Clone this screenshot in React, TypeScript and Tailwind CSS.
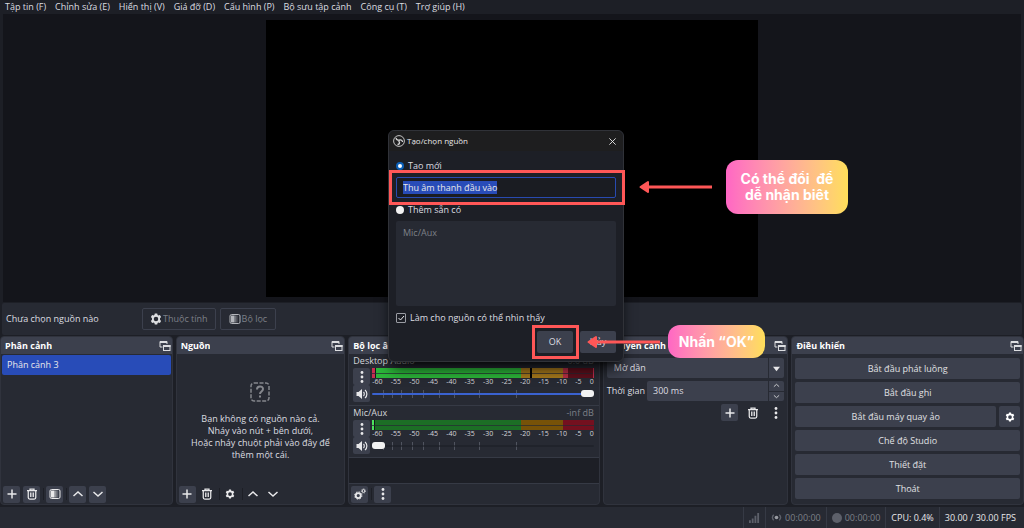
import { useEffect, useRef } from "react";
import type { ReactNode } from "react";

const MENU = [
  "Tập tin (F)",
  "Chỉnh sửa (E)",
  "Hiển thị (V)",
  "Giá đỡ (D)",
  "Cấu hình (P)",
  "Bộ sưu tập cảnh",
  "Công cụ (T)",
  "Trợ giúp (H)",
];

const DB_LABELS = ["-60", "-55", "-50", "-45", "-40", "-35", "-30", "-25", "-20", "-15", "-10", "-5", "0"];
const FADER_TICKS = [5, 9, 13, 18, 23, 30, 37, 48, 65];

function GearIcon({ className = "size-3" }: { className?: string }) {
  return (
    <svg viewBox="0 0 24 24" className={className} fill="currentColor" aria-hidden="true">
      <path
        fillRule="evenodd"
        d="M9.6 1h4.8l.8 3 1.600.9 3-.9 2.400 4.100-2.200 2.200v3.400l2.200 2.200-2.400 4.100-3-.9-1.600.9-.8 3H9.600l-.8-3-1.600-.9-3 .9-2.400-4.100L4 13.700v-3.400L1.800 8.100 4.200 4l3 .9L8.800 4zM12 7.500a4.500 4.500 0 1 0 0 9 4.500 4.500 0 0 0 0-9z"
      />
    </svg>
  );
}

function GearsIcon() {
  return (
    <svg viewBox="0 0 24 24" className="size-3" fill="none" stroke="currentColor" aria-hidden="true">
      <circle cx="8.500" cy="15" r="5" strokeWidth="3.500" />
      <circle cx="8.500" cy="15" r="7.300" strokeWidth="2" strokeDasharray="3 2.730" />
      <circle cx="19" cy="6" r="2.800" strokeWidth="2" />
      <circle cx="19" cy="6" r="4.300" strokeWidth="1.400" strokeDasharray="1.800 1.577" />
    </svg>
  );
}

function FilterIcon() {
  return (
    <svg viewBox="0 0 24 24" className="size-3" aria-hidden="true">
      <rect x="2" y="3" width="20" height="18" rx="3" fill="none" stroke="currentColor" strokeWidth="2" />
      <rect x="4" y="5" width="7" height="14" fill="currentColor" />
      <rect x="11" y="5" width="4" height="14" fill="currentColor" opacity="0.5" />
      <rect x="15" y="5" width="3" height="14" fill="currentColor" opacity="0.2" />
    </svg>
  );
}

function PopoutIcon() {
  return (
    <svg viewBox="0 0 24 24" className="size-3" fill="none" stroke="currentColor" strokeWidth="2" aria-hidden="true">
      <path d="M7 14H2V3h14v5" />
      <path d="M2 4h14" strokeWidth="4" />
      <rect x="9" y="11" width="13" height="10" />
      <path d="M8 12h15" strokeWidth="4" />
    </svg>
  );
}

function PlusIcon() {
  return (
    <svg viewBox="0 0 24 24" className="size-3" fill="none" stroke="currentColor" strokeWidth="3" aria-hidden="true">
      <path d="M12 3v18M3 12h18" />
    </svg>
  );
}

function TrashIcon() {
  return (
    <svg viewBox="0 0 24 24" className="size-3" fill="none" stroke="currentColor" aria-hidden="true">
      <path d="M2 5h20M8 4V2h8v2" strokeWidth="2.500" />
      <path d="M4.500 6v13a3 3 0 0 0 3 3h9a3 3 0 0 0 3-3V6" strokeWidth="2.500" />
      <path d="M9 9v9M12 9v9M15 9v9" strokeWidth="1.800" />
    </svg>
  );
}

function ChevronIcon({ down = false, className = "size-3" }: { down?: boolean; className?: string }) {
  return (
    <svg viewBox="0 0 24 24" className={className} fill="none" stroke="currentColor" strokeWidth="3" aria-hidden="true">
      <path d={down ? "M3 8l9 8 9-8" : "M3 16l9-8 9 8"} />
    </svg>
  );
}

function DotsIcon() {
  return (
    <svg viewBox="0 0 24 24" className="size-3" fill="currentColor" aria-hidden="true">
      <circle cx="12" cy="3" r="2.800" />
      <circle cx="12" cy="12" r="2.800" />
      <circle cx="12" cy="21" r="2.800" />
    </svg>
  );
}

function SpeakerIcon() {
  return (
    <svg viewBox="0 0 24 24" className="size-3" fill="none" stroke="currentColor" strokeWidth="2.400" aria-hidden="true">
      <path d="M1 8h4l7-6v20l-7-6H1z" fill="currentColor" stroke="none" />
      <path d="M15 8c2 2 2 6 0 8M18 4c5 4 5 12 0 16" />
    </svg>
  );
}

function ObsIcon() {
  return (
    <svg viewBox="0 0 24 24" className="size-3" fill="none" stroke="#d5d5d5" aria-hidden="true">
      <circle cx="12" cy="12" r="10.800" strokeWidth="1.800" />
      <path d="M6 6c1 4 4 5 7 4 3-1 6 1 6 4" strokeWidth="2.600" />
      <path d="M13 10c-2 2-1 4 0 5 0 3-2 4-4 4" strokeWidth="2.600" />
    </svg>
  );
}

function ToolButton({ label, flat = false, children }: { label: string; flat?: boolean; children: ReactNode }) {
  return (
    <button
      type="button"
      aria-label={label}
      className={`flex size-[17px] shrink-0 items-center justify-center rounded-xs text-[#e8e8ea] ${flat ? "" : "bg-[#3c404d]"}`}
    >
      {children}
    </button>
  );
}

function Dock({ title, children }: { title: string; children: ReactNode }) {
  return (
    <section className="flex min-w-0 flex-col overflow-hidden rounded-sm border border-[#30333d] bg-[#272a33]">
      <header className="flex h-[17px] shrink-0 items-center justify-between bg-[#3c404d] pr-px pl-1">
        <h2 className="truncate font-bold text-white">{title}</h2>
        <button type="button" aria-label={`Tách ${title}`} className="text-[#dcdde0]">
          <PopoutIcon />
        </button>
      </header>
      {children}
    </section>
  );
}

function Divider() {
  return <div className="-mr-px h-3 w-px shrink-0 bg-[#1d1f26]" />;
}

function Meter({ active }: { active: boolean }) {
  return (
    <div>
      <div className="relative h-[10px]">
        <div className="grid h-full grid-cols-[3px_145fr_41fr_31fr]">
          <div className={active ? "bg-[#c62f50]" : "border-r border-[#14151b] bg-[#4ce35c]"} />
          <div className={active ? "border-l border-[#14151b] bg-[#2cb83a]" : "bg-[#1c6e25]"} />
          <div className={active ? "bg-[#a87a1c]" : "bg-[#775208]"} />
          <div className={active ? "bg-[#5f0f1c]" : "bg-[#74101f]"}>
            {active && <div className="h-full w-[5px] bg-[#b92f46]" />}
          </div>
        </div>
        <div className="absolute inset-x-0 top-[5px] h-px bg-[#272a33]/70" />
        {active && <div className="absolute top-0 left-[71%] h-full w-[2px] bg-black" />}
        {active && <div className="absolute top-0 right-0 h-full w-px bg-[#c62f50]" />}
      </div>
      <div className="flex h-[7px] items-center justify-between text-[7px] leading-none text-[#d5d6da]">
        {DB_LABELS.map((label) => (
          <span key={label}>{label}</span>
        ))}
      </div>
    </div>
  );
}

function Channel({ name, level, volume, active }: { name: string; level: string; volume: number; active: boolean }) {
  return (
    <div className="h-[52px] shrink-0 border-b border-[#363a45] pr-[5px] pl-1">
      <div className="flex h-[14px] items-center justify-between">
        <span className="text-[#d5d6da]">{name}</span>
        <span className="text-[#7d8088]">{level}</span>
      </div>
      <div className="grid grid-cols-[17px_1fr] gap-x-[2px]">
        <ToolButton label={`Tùy chọn ${name}`}>
          <DotsIcon />
        </ToolButton>
        <Meter active={active} />
        <ToolButton label={`Tắt tiếng ${name}`}>
          <SpeakerIcon />
        </ToolButton>
        <div className="relative flex h-[17px] items-center">
          {FADER_TICKS.map((tick) => (
            <div key={tick} className="absolute h-2 w-px bg-[#50545f]" style={{ left: `${tick}%` }} />
          ))}
          <input
            type="range"
            aria-label={`Âm lượng ${name}`}
            defaultValue={volume}
            className={`relative h-[2px] w-full appearance-none rounded-full [&::-webkit-slider-thumb]:h-[7px] [&::-webkit-slider-thumb]:w-[13px] [&::-webkit-slider-thumb]:appearance-none [&::-webkit-slider-thumb]:rounded-[3px] [&::-webkit-slider-thumb]:bg-[#f2f2f2] ${active ? "bg-[#3a62d0]" : "bg-[#1d1f26]/60"}`}
          />
        </div>
      </div>
    </div>
  );
}

function ControlButton({ children }: { children: ReactNode }) {
  return (
    <button type="button" className="h-[21px] w-full rounded-xs bg-[#3c404d] text-[#e0e1e4]">
      {children}
    </button>
  );
}

function SourceDialog() {
  const nameRef = useRef<HTMLInputElement>(null);

  useEffect(() => {
    nameRef.current?.focus();
    nameRef.current?.select();
  }, []);

  return (
    <div
      role="dialog"
      aria-label="Tạo/chọn nguồn"
      className="absolute top-[130px] left-[388px] w-[236px] rounded-md border border-[#303238] bg-[#1d1f26] shadow-lg shadow-black/70"
    >
      <div className="flex h-5 items-center gap-[2px] rounded-t-md bg-[#1e1e1f] pr-[6px] pl-1 text-[8px] text-[#e8e8e8]">
        <ObsIcon />
        <span>Tạo/chọn nguồn</span>
        <button type="button" aria-label="Đóng" className="ml-auto">
          <svg viewBox="0 0 10 10" className="size-[9px]" stroke="currentColor" fill="none">
            <path d="M1.500 1.500l7 7M8.500 1.500l-7 7" />
          </svg>
        </button>
      </div>
      <form className="flex flex-col px-[7px] pt-[9px] pb-2 text-[#dcdde0]" onSubmit={(e) => e.preventDefault()}>
        <label className="flex h-3 items-center gap-1">
          <input
            type="radio"
            name="source"
            defaultChecked
            className="size-2 appearance-none rounded-full border-2 border-[#0a5fb8] bg-white"
          />
          Tạo mới
        </label>
        <input
          ref={nameRef}
          aria-label="Tên nguồn"
          defaultValue="Thu âm thanh đầu vào"
          className="mt-[5px] h-[21px] rounded-xs border border-[#284ab0] bg-[#1a1c22] px-[6px] outline-none selection:bg-[#284cb8] selection:text-[#e8e8ea]"
        />
        <label className="mt-[6px] flex h-3 items-center gap-1">
          <input type="radio" name="source" className="size-2 appearance-none rounded-full bg-[#f2f2f2]" />
          Thêm sẵn có
        </label>
        <ul className="mt-[5px] h-[85px] rounded-xs bg-[#272a33] px-[7px] py-[6px] text-[#7d8088]">
          <li>Mic/Aux</li>
        </ul>
        <label className="mt-[6px] flex h-3 items-center gap-1">
          <span className="grid size-[10px]">
            <input
              type="checkbox"
              defaultChecked
              className="col-start-1 row-start-1 size-[10px] appearance-none rounded-[1px] border border-[#9a9ca3]"
            />
            <svg
              viewBox="0 0 10 10"
              className="pointer-events-none col-start-1 row-start-1 size-[10px]"
              fill="none"
              stroke="#e8e8ea"
            >
              <path d="M2.500 5l2 2 3.500-4" />
            </svg>
          </span>
          Làm cho nguồn có thể nhìn thấy
        </label>
        <div className="mt-[7px] flex justify-end gap-[7px]">
          <button type="submit" className="h-[22px] w-9 rounded-xs bg-[#3c404d]">
            OK
          </button>
          <button type="button" className="h-[22px] w-9 rounded-xs bg-[#3c404d]">
            Hủy
          </button>
        </div>
      </form>
    </div>
  );
}

function Arrow({ className }: { className: string }) {
  return (
    <svg viewBox="0 0 73 14" className={`absolute h-[14px] w-[73px] ${className}`} aria-hidden="true">
      <path d="M1.500 7l7.500-5v10z" fill="#ff5757" stroke="#ff5757" strokeWidth="2" strokeLinejoin="round" />
      <path d="M8 7h65" stroke="#ff5757" strokeWidth="3" />
    </svg>
  );
}

export default function App() {
  return (
    <div className="relative flex h-screen flex-col overflow-hidden bg-[#1d1f26] font-['Open_Sans','Noto_Sans',sans-serif] text-[9px] leading-3">
      <nav className="flex h-[14px] shrink-0 items-center gap-[9px] px-[5px] text-[#dcdde0]">
        {MENU.map((item) => (
          <button key={item} type="button" className="whitespace-nowrap">
            {item}
          </button>
        ))}
      </nav>

      <main className="mx-[3px] flex min-h-0 flex-1 justify-center bg-[#14151b] pt-[6px] pb-[5px]">
        <div className="aspect-video h-full bg-black" />
      </main>

      <div className="mx-[2px] mt-px flex h-8 shrink-0 items-center gap-1 rounded-xs bg-[#272a33] px-1">
        <span className="w-[132px] text-[#dcdde0]">Chưa chọn nguồn nào</span>
        <button
          type="button"
          className="flex h-[22px] items-center gap-px rounded-xs border border-[#3c404d] px-[7px] text-[#7d8088]"
        >
          <GearIcon className="size-3 text-[#dcdde0]" />
          Thuộc tính
        </button>
        <button
          type="button"
          className="flex h-[22px] items-center gap-px rounded-xs border border-[#3c404d] px-2 text-[#7d8088]"
        >
          <span className="text-[#b4b6bb]">
            <FilterIcon />
          </span>
          Bộ lọc
        </button>
      </div>

      <div className="mt-px grid h-[169px] shrink-0 grid-cols-[173fr_170fr_252fr_186fr_233fr] gap-x-[3px]">
        <Dock title="Phân cảnh">
          <ul className="flex-1 p-px">
            <li className="flex h-5 items-center rounded-xs bg-[#284cb8] px-[5px] text-[#e8e8ea]">Phân cảnh 3</li>
          </ul>
          <div className="flex h-5 items-center gap-[3px] px-[2px]">
            <ToolButton label="Thêm cảnh">
              <PlusIcon />
            </ToolButton>
            <ToolButton label="Xóa cảnh">
              <TrashIcon />
            </ToolButton>
            <Divider />
            <ToolButton label="Bộ lọc cảnh">
              <FilterIcon />
            </ToolButton>
            <Divider />
            <ToolButton label="Lên">
              <ChevronIcon />
            </ToolButton>
            <ToolButton label="Xuống">
              <ChevronIcon down />
            </ToolButton>
          </div>
        </Dock>

        <Dock title="Nguồn">
          <div className="flex flex-1 flex-col items-center pt-7 text-center text-[#dcdde0]">
            <svg viewBox="0 0 20 20" className="size-5" fill="none" stroke="#85878d" aria-hidden="true">
              <rect x="1" y="1" width="18" height="18" rx="3" strokeWidth="1.500" strokeDasharray="4 1.500" />
              <path d="M7 7.500c0-4 6-4 6-.5 0 2.500-3 2.500-3 5" strokeWidth="2" />
              <path d="M10 13.500v2" strokeWidth="2" />
            </svg>
            <p className="mt-[11px]">
              Bạn không có nguồn nào cả.
              <br />
              Nháy vào nút + bên dưới,
              <br />
              Hoặc nháy chuột phải vào đây để
              <br />
              thêm một cái.
            </p>
          </div>
          <div className="flex h-5 items-center gap-[3px] px-[2px]">
            <ToolButton label="Thêm nguồn">
              <PlusIcon />
            </ToolButton>
            <ToolButton label="Xóa nguồn" flat>
              <TrashIcon />
            </ToolButton>
            <Divider />
            <ToolButton label="Thuộc tính nguồn" flat>
              <GearIcon className="size-[10px]" />
            </ToolButton>
            <Divider />
            <ToolButton label="Lên" flat>
              <ChevronIcon />
            </ToolButton>
            <ToolButton label="Xuống" flat>
              <ChevronIcon down />
            </ToolButton>
          </div>
        </Dock>

        <Dock title="Bộ lọc âm thanh">
          <Channel name="Desktop Audio" level="0.0 dB" volume={100} active />
          <Channel name="Mic/Aux" level="-inf dB" volume={0} active={false} />
          <div className="flex-1 border-b border-[#363a45] bg-[#1d1f26]" />
          <div className="flex h-5 shrink-0 items-center gap-[3px] px-[2px]">
            <ToolButton label="Cài đặt âm thanh">
              <GearsIcon />
            </ToolButton>
            <Divider />
            <ToolButton label="Thêm tùy chọn">
              <DotsIcon />
            </ToolButton>
          </div>
        </Dock>

        <Dock title="Chuyển cảnh">
          <div className="flex flex-col gap-[3px] px-[3px] pt-1 text-[#dcdde0]">
            <div className="grid items-center">
              <select
                aria-label="Hiệu ứng chuyển cảnh"
                className="col-start-1 row-start-1 h-5 appearance-none rounded-xs bg-[#3c404d] px-[7px]"
              >
                <option>Mờ dần</option>
              </select>
              <div className="pointer-events-none col-start-1 row-start-1 flex h-5 w-4 items-center justify-center justify-self-end border-l border-[#272a33]">
                <svg viewBox="0 0 8 8" className="size-[7px]" fill="#e8e8ea">
                  <path d="M0 2h8L4 7z" />
                </svg>
              </div>
            </div>
            <div className="flex items-center gap-[2px]">
              <label htmlFor="duration" className="shrink-0">
                Thời gian
              </label>
              <div className="flex h-5 min-w-0 flex-1 rounded-xs bg-[#3c404d]">
                <input id="duration" defaultValue="300 ms" className="min-w-0 flex-1 bg-transparent px-[6px] outline-none" />
                <div className="flex w-4 flex-col border-l border-[#272a33]">
                  <button
                    type="button"
                    aria-label="Tăng"
                    className="flex flex-1 items-center justify-center border-b border-[#272a33]"
                  >
                    <ChevronIcon className="size-[7px]" />
                  </button>
                  <button type="button" aria-label="Giảm" className="flex flex-1 items-center justify-center">
                    <ChevronIcon down className="size-[7px]" />
                  </button>
                </div>
              </div>
            </div>
            <div className="flex justify-end gap-[6px]">
              <ToolButton label="Thêm chuyển cảnh">
                <PlusIcon />
              </ToolButton>
              <ToolButton label="Xóa chuyển cảnh" flat>
                <TrashIcon />
              </ToolButton>
              <ToolButton label="Tùy chọn chuyển cảnh" flat>
                <DotsIcon />
              </ToolButton>
            </div>
          </div>
        </Dock>

        <Dock title="Điều khiển">
          <div className="flex flex-col gap-[3px] px-[3px] pt-1">
            <ControlButton>Bắt đầu phát luồng</ControlButton>
            <ControlButton>Bắt đầu ghi</ControlButton>
            <div className="flex gap-[3px]">
              <ControlButton>Bắt đầu máy quay ảo</ControlButton>
              <button
                type="button"
                aria-label="Cấu hình máy quay ảo"
                className="flex h-[21px] w-[21px] shrink-0 items-center justify-center rounded-xs bg-[#3c404d] text-white"
              >
                <GearIcon className="size-[10px]" />
              </button>
            </div>
            <ControlButton>Chế độ Studio</ControlButton>
            <ControlButton>Thiết đặt</ControlButton>
            <ControlButton>Thoát</ControlButton>
          </div>
        </Dock>
      </div>

      <footer className="mt-[2px] flex h-[21px] shrink-0 justify-end bg-[#272a33] text-[#7d8088]">
        <div className="flex items-center border-l border-[#363a45] px-[5px]">
          <svg viewBox="0 0 12 12" className="size-[11px]" fill="#5d606a" aria-hidden="true">
            <path d="M0 9h2v3H0zM3 7h2v5H3zM6 4h2v8H6zM9 1h2v11H9z" />
          </svg>
        </div>
        <div className="flex items-center gap-[3px] border-l border-[#363a45] px-[5px]">
          <svg viewBox="0 0 12 12" className="size-[11px]" fill="none" stroke="#5d606a" aria-hidden="true">
            <circle cx="6" cy="6" r="2" fill="#9a9ca3" stroke="none" />
            <path d="M3 3c-2 2-2 4 0 6M9 3c2 2 2 4 0 6" strokeWidth="1.500" />
          </svg>
          00:00:00
        </div>
        <div className="flex items-center gap-[3px] border-l border-[#363a45] px-[5px]">
          <span className="size-[10px] rounded-full bg-[#5d606a]" />
          00:00:00
        </div>
        <div className="flex items-center border-l border-[#363a45] px-[5px] text-[#e8e8ea]">CPU: 0.4%</div>
        <div className="flex items-center border-l border-[#363a45] pr-2 pl-[5px] text-[#e8e8ea]">
          30.00 / 30.00 FPS
        </div>
      </footer>

      <SourceDialog />

      <div className="absolute top-[170px] left-[389px] h-[35px] w-[236px] border-3 border-[#ff5757]" />
      <div className="absolute top-[325px] left-[532px] h-[34px] w-[47px] border-3 border-[#ff5757]" />
      <Arrow className="top-[180px] left-[639px]" />
      <Arrow className="top-[335px] left-[587px]" />
      <div className="absolute top-[160px] left-[726px] flex h-[54px] w-[122px] items-center justify-center rounded-xl bg-linear-to-r from-[#ff66c4] to-[#ffde59] text-center font-['Inter',sans-serif] text-sm leading-4 font-bold whitespace-pre text-white">
        {"Có thể đổi  để\ndễ nhận biêt"}
      </div>
      <div className="absolute top-[325px] left-[668px] flex h-[33px] w-[97px] items-center justify-center rounded-xl bg-linear-to-r from-[#ff66c4] to-[#ffde59] font-['Inter',sans-serif] text-sm font-bold whitespace-nowrap text-white">
        Nhấn “OK”
      </div>
    </div>
  );
}
